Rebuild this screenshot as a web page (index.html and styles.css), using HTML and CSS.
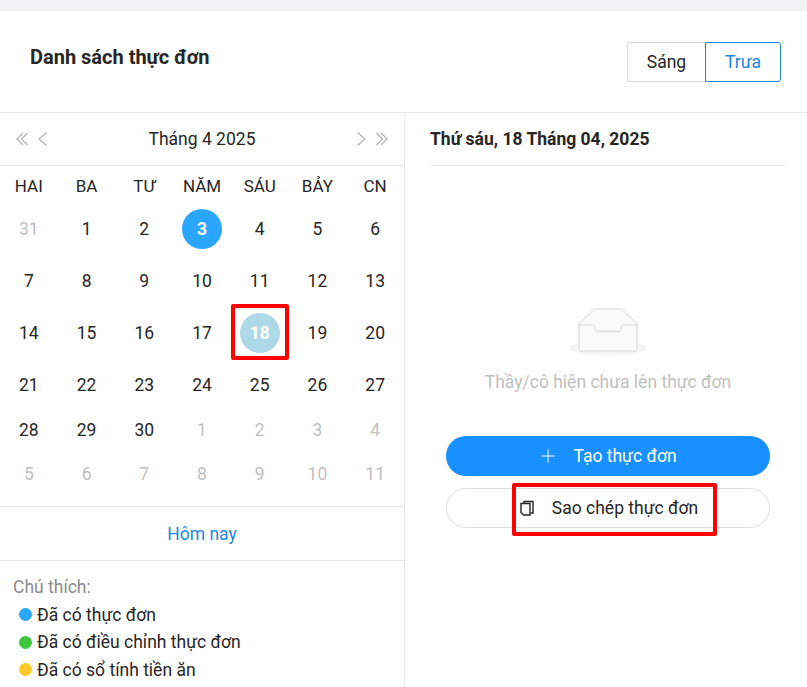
FILE: index.html
```html
<!DOCTYPE html>
<html>
<head>
  <meta charset="UTF-8">
  <title>Danh sách thực đơn</title>
  <link rel="stylesheet" href="styles.css">
</head>
<body>
  <div class="topbar"></div>
  <div class="header">
    <h1>Danh sách thực đơn</h1>
    <div class="toggle">
      <span class="toggle-item">Sáng</span>
      <span class="toggle-item active">Trưa</span>
    </div>
  </div>
  <div class="content">
    <div class="left">
      <div class="cal-head">
        <div class="cal-nav">
          <svg width="12" height="14" viewBox="0 0 12 14"><path d="M7 1 1 7l6 6M11.500 1l-6 6 6 6"/></svg>
          <svg width="9" height="14" viewBox="0 0 9 14"><path d="M8.500 .5 1 7l7.500 6.500"/></svg>
        </div>
        <div class="cal-title">Tháng 4 2025</div>
        <div class="cal-nav">
          <svg width="9" height="14" viewBox="0 0 9 14"><path d="M.5 .5 8 7 .5 13.500"/></svg>
          <svg width="12" height="14" viewBox="0 0 12 14"><path d="M.5 1l6 6-6 6M5 1l6 6-6 6"/></svg>
        </div>
      </div>
      <div class="weekdays">
        <span>HAI</span><span>BA</span><span>TƯ</span><span>NĂM</span><span>SÁU</span><span>BẢY</span><span>CN</span>
      </div>
      <div class="days">
        <span class="day muted">31</span><span class="day">1</span><span class="day">2</span><span class="day has-menu"><b>3</b></span><span class="day">4</span><span class="day">5</span><span class="day">6</span>
        <span class="day">7</span><span class="day">8</span><span class="day">9</span><span class="day">10</span><span class="day">11</span><span class="day">12</span><span class="day">13</span>
        <span class="day">14</span><span class="day">15</span><span class="day">16</span><span class="day">17</span><span class="day selected"><b>18</b><i class="mark mark-day"></i></span><span class="day">19</span><span class="day">20</span>
        <span class="day">21</span><span class="day">22</span><span class="day">23</span><span class="day">24</span><span class="day">25</span><span class="day">26</span><span class="day">27</span>
        <span class="day">28</span><span class="day">29</span><span class="day">30</span><span class="day muted">1</span><span class="day muted">2</span><span class="day muted">3</span><span class="day muted">4</span>
        <span class="day muted">5</span><span class="day muted">6</span><span class="day muted">7</span><span class="day muted">8</span><span class="day muted">9</span><span class="day muted">10</span><span class="day muted">11</span>
      </div>
      <div class="today"><a>Hôm nay</a></div>
      <div class="legend">
        <div class="legend-title">Chú thích:</div>
        <div class="legend-row"><i class="dot blue"></i>Đã có thực đơn</div>
        <div class="legend-row"><i class="dot green"></i>Đã có điều chỉnh thực đơn</div>
        <div class="legend-row"><i class="dot yellow"></i>Đã có sổ tính tiền ăn</div>
      </div>
    </div>
    <div class="right">
      <div class="date-title">Thứ sáu, 18 Tháng 04, 2025</div>
      <div class="empty">
        <svg width="80" height="50" viewBox="0 0 80 50">
          <ellipse cx="40" cy="41" rx="39" ry="7.500" fill="#f5f5f5"/>
          <path class="tray" d="M11 17 26 2.500Q27 2 28 2H52Q53 2 54 2.500L69 17V24H11Z"/>
          <path class="tray" d="M11 18H24Q26 18 26.500 20L27.500 23Q28 25 30 25H50Q52 25 52.500 23L53.500 20Q54 18 56 18H69V42Q69 44 67 44H13Q11 44 11 42Z"/>
        </svg>
        <p>Thầy/cô hiện chưa lên thực đơn</p>
      </div>
      <div class="actions">
        <div class="btn primary">
          <svg width="14" height="14" viewBox="0 0 14 14"><path d="M7 .5v13M.5 7h13"/></svg>
          <span>Tạo thực đơn</span>
        </div>
        <div class="btn outline">
          <svg width="14" height="16" viewBox="0 0 14 16"><path d="M4 3.500V1.500h9V13H10.500"/><path d="M1 3.500H10V15H3.500L1 12.500Z"/></svg>
          <span>Sao chép thực đơn</span>
          <i class="mark mark-copy"></i>
        </div>
      </div>
    </div>
  </div>
</body>
</html>
```

FILE: styles.css
```css
* {
  box-sizing: border-box;
}

body {
  margin: 0;
  height: 687px;
  overflow: hidden;
  background: #fff;
  color: #262626;
  font-family: Roboto, sans-serif;
  font-size: 17.500px;
}

.topbar {
  height: 11px;
  background: #f0f2f5;
}

.header {
  height: 102px;
  padding: 31px 26px 0 30px;
  display: flex;
  justify-content: space-between;
  align-items: flex-start;
  border-bottom: 1px solid #e8e8e8;
}

h1 {
  margin: 0;
  font-size: 20px;
  line-height: 30px;
  font-weight: 700;
}

.toggle {
  display: flex;
}

.toggle-item {
  height: 40px;
  line-height: 38px;
  text-align: center;
  width: 78px;
  border: 1px solid #d9d9d9;
  border-right: 0;
  border-radius: 3px 0 0 3px;
}

.toggle-item.active {
  width: 76px;
  color: #1f86e5;
  border: 1px solid #1f86e5;
  border-radius: 0 3px 3px 0;
}

.content {
  display: flex;
  height: 574px;
}

.left {
  width: 405px;
  border-right: 1px solid #e8e8e8;
}

.cal-head {
  height: 53px;
  padding: 0 16px;
  display: flex;
  align-items: center;
  justify-content: space-between;
  border-bottom: 1px solid #e8e8e8;
}

.cal-title {
  flex: 1;
  text-align: center;
}

.cal-nav {
  display: flex;
  align-items: center;
  width: 31px;
  gap: 10px;
}

.cal-nav svg path {
  fill: none;
  stroke: #b5b5b5;
  stroke-width: 1.300;
}

.weekdays,
.days {
  display: grid;
  grid-template-columns: repeat(7, 1fr);
  text-align: center;
}

.weekdays {
  height: 37px;
  padding-top: 8px;
  line-height: 24px;
  font-size: 17px;
}

/* the rows of the reference are not evenly spaced */
.days {
  grid-template-rows: 52px 52px 51px 54px 36px 52px;
  height: 304px;
  border-bottom: 1px solid #e8e8e8;
}

.day {
  position: relative;
  display: flex;
  align-items: center;
  justify-content: center;
}

.muted {
  color: #bfbfbf;
}

.day b {
  width: 40px;
  height: 40px;
  line-height: 40px;
  text-align: center;
  border-radius: 50%;
  color: #fff;
  font-weight: 700;
}

.has-menu b {
  background: #2ba6ff;
}

.selected b {
  background: #add8e6;
}

/* red annotation boxes drawn over the screenshot */
.mark {
  position: absolute;
  border: 4px solid #f00;
  border-radius: 2px;
}

.mark-day {
  left: 0;
  top: -3px;
  width: 58px;
  height: 56px;
}

.mark-copy {
  left: 65px;
  top: -6px;
  width: 205px;
  height: 53px;
}

.today {
  height: 54px;
  line-height: 54px;
  text-align: center;
  color: #1f86e5;
  border-bottom: 1px solid #e8e8e8;
}

.legend {
  padding: 13px 13px 0;
}

.legend-title {
  color: #8c8c8c;
  line-height: 27px;
}

.legend-row {
  display: flex;
  align-items: center;
  padding-left: 6px;
  height: 27.500px;
}

.dot {
  width: 13px;
  height: 13px;
  border-radius: 50%;
  margin-right: 5px;
}

.blue {
  background: #2ba6ff;
}

.green {
  background: #3cc63c;
}

.yellow {
  background: #ffca28;
}

.right {
  flex: 1;
  padding: 0 21px 0 25px;
}

.date-title {
  height: 53px;
  line-height: 52px;
  font-weight: 700;
  border-bottom: 1px solid #e8e8e8;
}

.empty {
  margin-top: 141px;
  text-align: center;
  color: #bfbfbf;
}

.empty svg {
  display: block;
  margin: 0 auto;
}

.tray {
  fill: #fafafa;
  stroke: #e4e4e4;
  stroke-width: 1.500;
}

.empty p {
  margin: 12px 0 0;
  line-height: 26px;
}

.actions {
  margin-top: 41px;
  padding: 0 16px;
}

.btn {
  position: relative;
  height: 40px;
  padding-left: 2px;
  border-radius: 20px;
  display: flex;
  align-items: center;
  justify-content: center;
  gap: 18px;
}

.btn.primary {
  background: #1890ff;
  color: #fff;
}

.btn.primary svg path {
  stroke: #fff;
  fill: none;
}

.btn.outline {
  margin-top: 12px;
  border: 1px solid #ddd;
}

.btn.outline svg path {
  stroke: #262626;
  stroke-width: 1.400;
  fill: none;
}
```
